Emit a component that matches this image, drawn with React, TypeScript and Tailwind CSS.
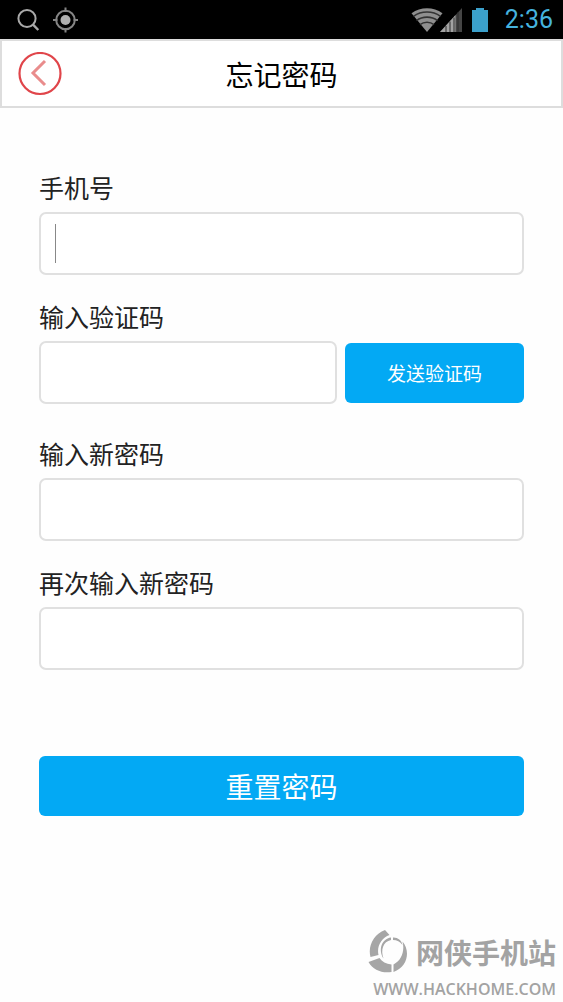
import type { ReactNode } from "react";

function StatusBar() {
  return (
    <div className="flex h-[39px] items-center justify-between bg-black pr-[10px] pl-4">
      <div className="flex items-center gap-3">
        <svg width="24" height="24" viewBox="0 0 24 24" fill="none" stroke="#a9a9a9" strokeWidth="2" aria-hidden="true">
          <circle cx="11" cy="10.5" r="8.6" />
          <path d="M17 16.7L22.3 22" strokeWidth="2.4" />
        </svg>
        <svg width="26" height="26" viewBox="0 0 26 26" fill="none" stroke="#858585" strokeWidth="2" aria-hidden="true">
          <circle cx="13.5" cy="13" r="9.3" />
          <circle cx="13.5" cy="13" r="5" fill="#b0b0b0" stroke="none" />
          <path d="M13.5 0.5V5M13.5 21V25.5M1 13H5.5M21.5 13H26" />
        </svg>
      </div>
      <div className="flex items-center">
        <svg width="32" height="26" viewBox="0 0 32 26" aria-hidden="true">
          <path d="M0.5 6.2C9.5 -0.4 22.5 -0.4 31.5 6.2L16 25Z" fill="#8f8f8f" />
          <path d="M2.5 9.3C10.5 3.6 21.5 3.6 29.5 9.3M5.5 13.6C11.5 9 20.5 9 26.5 13.6M9 17.6C13 14.4 19 14.4 23 17.6" fill="none" stroke="#333333" strokeWidth="1.6" />
        </svg>
        <svg className="-ml-1" width="24" height="26" viewBox="0 0 24 26" aria-hidden="true">
          <path d="M1 25L23 1V25Z" fill="#454545" />
          <path d="M1 25L16.5 8V25Z" fill="#a3a3a3" />
          <path d="M7 19V25M11 14.5V25M15 10.5V25M19 5V25" stroke="#2c2c2c" strokeWidth="1" />
        </svg>
        <svg className="ml-2" width="18" height="26" viewBox="0 0 18 26" aria-hidden="true">
          <path d="M5 1H13V3H17V25H1V3H5Z" fill="#3ba0cb" />
        </svg>
        <span className="ml-4 font-['Roboto',sans-serif] text-[25px] leading-8 text-[#45b3de]">2:36</span>
      </div>
    </div>
  );
}

function Field({ id, label, type, caret, children }: { id: string; label: string; type: string; caret?: boolean; children?: ReactNode }) {
  return (
    <div className="flex flex-col gap-[7px]">
      <label htmlFor={id} className="text-[25px] leading-9">{label}</label>
      <div className="flex items-end gap-2">
        <div className="relative min-w-0 flex-1">
          <input
            id={id}
            type={type}
            className="block h-[63px] w-full rounded-[7px] border-2 border-[#e0e0e0] bg-white px-4 text-2xl outline-none"
          />
          {caret && <span className="absolute inset-y-3 left-4 w-px bg-[#888888]" aria-hidden="true" />}
        </div>
        {children}
      </div>
    </div>
  );
}

function Watermark() {
  return (
    <footer className="mt-auto flex flex-col items-end gap-1 pr-[7px] pb-px text-[#a3a3a3]">
      <div className="flex items-center gap-2">
        <svg width="40" height="43" viewBox="0 0 40 43" fill="#a6a6a6" aria-hidden="true">
          <path d="M17 0L21.5 5C13.5 8 8.5 16 10.5 25L2.5 27C-0.5 16 6 4 17 0Z" />
          <path d="M0.5 32L11.5 28C14 31.5 18 34 23.5 34.5V42C14 43.5 5 40 0.5 32Z" />
          <path d="M34.5 11.5C42.5 21 40 37 25.5 42V34.5C33.5 30.5 37 21 34.5 11.5Z" />
          <path d="M15.5 28.5C10 20 13.5 8.8 23 7.5V10C15 11.5 12.5 20 15.5 28.5Z" />
          <path d="M25 7.5C29.5 7.2 33.5 10 34.5 15C32 11.5 29 10 25 10Z" />
        </svg>
        <span className="text-[28px] leading-9 font-bold">网侠手机站</span>
      </div>
      <span className="font-['Open_Sans',sans-serif] text-base leading-6 font-semibold">WWW.HACKHOME.COM</span>
    </footer>
  );
}

export default function App() {
  return (
    <div className="flex min-h-screen flex-col bg-[#fefefe] font-['Noto_Sans_CJK_SC',sans-serif] text-[#222222]">
      <StatusBar />
      <header className="grid h-[69px] grid-cols-[44px_1fr_44px] items-center border-2 border-[#dddddd] bg-white px-4">
        <button type="button" aria-label="返回">
          <svg width="44" height="44" viewBox="0 0 44 44" fill="none" aria-hidden="true">
            <circle cx="22" cy="21.5" r="20.5" stroke="#e0454a" strokeWidth="2.2" />
            <path d="M27 9L15 21L27 33" stroke="#e98c8c" strokeWidth="3" />
          </svg>
        </button>
        <h1 className="text-center text-[28px] leading-10 text-black">忘记密码</h1>
      </header>
      <form className="flex flex-col px-[39px] pt-[61px]" onSubmit={(event) => event.preventDefault()}>
        <div className="flex flex-col gap-[23px]">
          <Field id="phone" label="手机号" type="tel" caret />
          <Field id="code" label="输入验证码" type="text">
            <button type="button" className="mb-px h-[60px] w-[179px] rounded-md bg-[#03a9f4] text-[19px] text-white">
              发送验证码
            </button>
          </Field>
        </div>
        <div className="mt-[31px] flex flex-col gap-[23px]">
          <Field id="password" label="输入新密码" type="password" />
          <Field id="confirm" label="再次输入新密码" type="password" />
        </div>
        <button type="submit" className="mt-[86px] h-[60px] rounded-md bg-[#03a9f4] text-[28px] text-white">
          重置密码
        </button>
      </form>
      <Watermark />
    </div>
  );
}
